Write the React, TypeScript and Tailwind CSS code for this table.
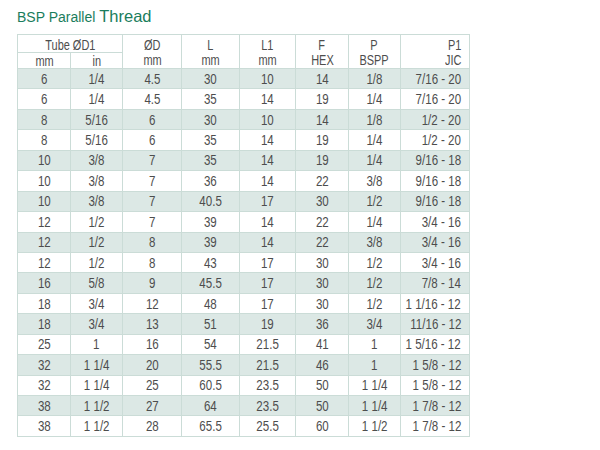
import React from "react";

const rows: string[][] = [
  ["6", "1/4", "4.5", "30", "10", "14", "1/8", "7/16 - 20"],
  ["6", "1/4", "4.5", "35", "14", "19", "1/4", "7/16 - 20"],
  ["8", "5/16", "6", "30", "10", "14", "1/8", "1/2 - 20"],
  ["8", "5/16", "6", "35", "14", "19", "1/4", "1/2 - 20"],
  ["10", "3/8", "7", "35", "14", "19", "1/4", "9/16 - 18"],
  ["10", "3/8", "7", "36", "14", "22", "3/8", "9/16 - 18"],
  ["10", "3/8", "7", "40.5", "17", "30", "1/2", "9/16 - 18"],
  ["12", "1/2", "7", "39", "14", "22", "1/4", "3/4 - 16"],
  ["12", "1/2", "8", "39", "14", "22", "3/8", "3/4 - 16"],
  ["12", "1/2", "8", "43", "17", "30", "1/2", "3/4 - 16"],
  ["16", "5/8", "9", "45.5", "17", "30", "1/2", "7/8 - 14"],
  ["18", "3/4", "12", "48", "17", "30", "1/2", "1 1/16 - 12"],
  ["18", "3/4", "13", "51", "19", "36", "3/4", "11/16 - 12"],
  ["25", "1", "16", "54", "21.5", "41", "1", "1 5/16 - 12"],
  ["32", "1 1/4", "20", "55.5", "21.5", "46", "1", "1 5/8 - 12"],
  ["32", "1 1/4", "25", "60.5", "23.5", "50", "1 1/4", "1 5/8 - 12"],
  ["38", "1 1/2", "27", "64", "23.5", "50", "1 1/4", "1 7/8 - 12"],
  ["38", "1 1/2", "28", "65.5", "25.5", "60", "1 1/2", "1 7/8 - 12"],
];

const widths = [53, 52, 59, 58, 56, 53, 52, 69];

function H({ children, right }: { children: React.ReactNode; right?: boolean }) {
  return (
    <div className={`flex ${right ? "justify-end" : "justify-center"}`}>
      <span
        className={`shrink-0 whitespace-nowrap scale-x-[0.73] ${right ? "origin-right" : "origin-center"}`}
      >
        {children}
      </span>
    </div>
  );
}

function D({ children, right }: { children: React.ReactNode; right?: boolean }) {
  return (
    <div className={`flex ${right ? "justify-end" : "justify-center"}`}>
      <span
        className={`shrink-0 whitespace-nowrap scale-x-[0.77] ${right ? "origin-right" : "origin-center"}`}
      >
        {children}
      </span>
    </div>
  );
}

const th = "font-normal border border-[#cbdcd7] p-0 whitespace-nowrap";

export default function App() {
  return (
    <div className="w-[600px] h-[450px] bg-white pl-[17px] pt-[8px]">
      <div className="h-[26px] text-[#1a7d5c] font-['Liberation_Sans',Arial,sans-serif] leading-[17px]">
        <span className="text-[14px]">BSP Parallel </span>
        <span className="text-[16.5px]">Thread</span>
      </div>
      <table className="border-collapse table-fixed w-[453px] text-[15px] text-[#4d4d4d] font-['Liberation_Sans',Arial,sans-serif]">
        <colgroup>
          {widths.map((w, i) => (
            <col key={i} style={{ width: w }} />
          ))}
        </colgroup>
        <thead>
          <tr className="h-[18px] leading-[15px]">
            <th colSpan={2} className={`${th} align-bottom`}>
              <H>Tube ØD1</H>
            </th>
            <th rowSpan={2} className={th}>
              <H>ØD</H>
              <H>mm</H>
            </th>
            <th rowSpan={2} className={th}>
              <H>L</H>
              <H>mm</H>
            </th>
            <th rowSpan={2} className={th}>
              <H>L1</H>
              <H>mm</H>
            </th>
            <th rowSpan={2} className={th}>
              <H>F</H>
              <H>HEX</H>
            </th>
            <th rowSpan={2} className={th}>
              <H>P</H>
              <H>BSPP</H>
            </th>
            <th rowSpan={2} className={`${th} pr-[8px]`}>
              <H right>P1</H>
              <H right>JIC</H>
            </th>
          </tr>
          <tr className="h-[16px] leading-[15px]">
            <th className={`${th} align-top`}>
              <H>mm</H>
            </th>
            <th className={`${th} align-top`}>
              <H>in</H>
            </th>
          </tr>
        </thead>
        <tbody>
          {rows.map((r, i) => (
            <tr key={i} className={`h-[20.45px] ${i % 2 === 0 ? "bg-[#dce8e5]" : "bg-white"}`}>
              {r.map((c, j) => (
                <td
                  key={j}
                  className={`border border-[#cbdcd7] p-0 leading-[16px] whitespace-nowrap ${j === 7 ? "pr-[8px]" : ""}`}
                >
                  <D right={j === 7}>{c}</D>
                </td>
              ))}
            </tr>
          ))}
        </tbody>
      </table>
    </div>
  );
}
